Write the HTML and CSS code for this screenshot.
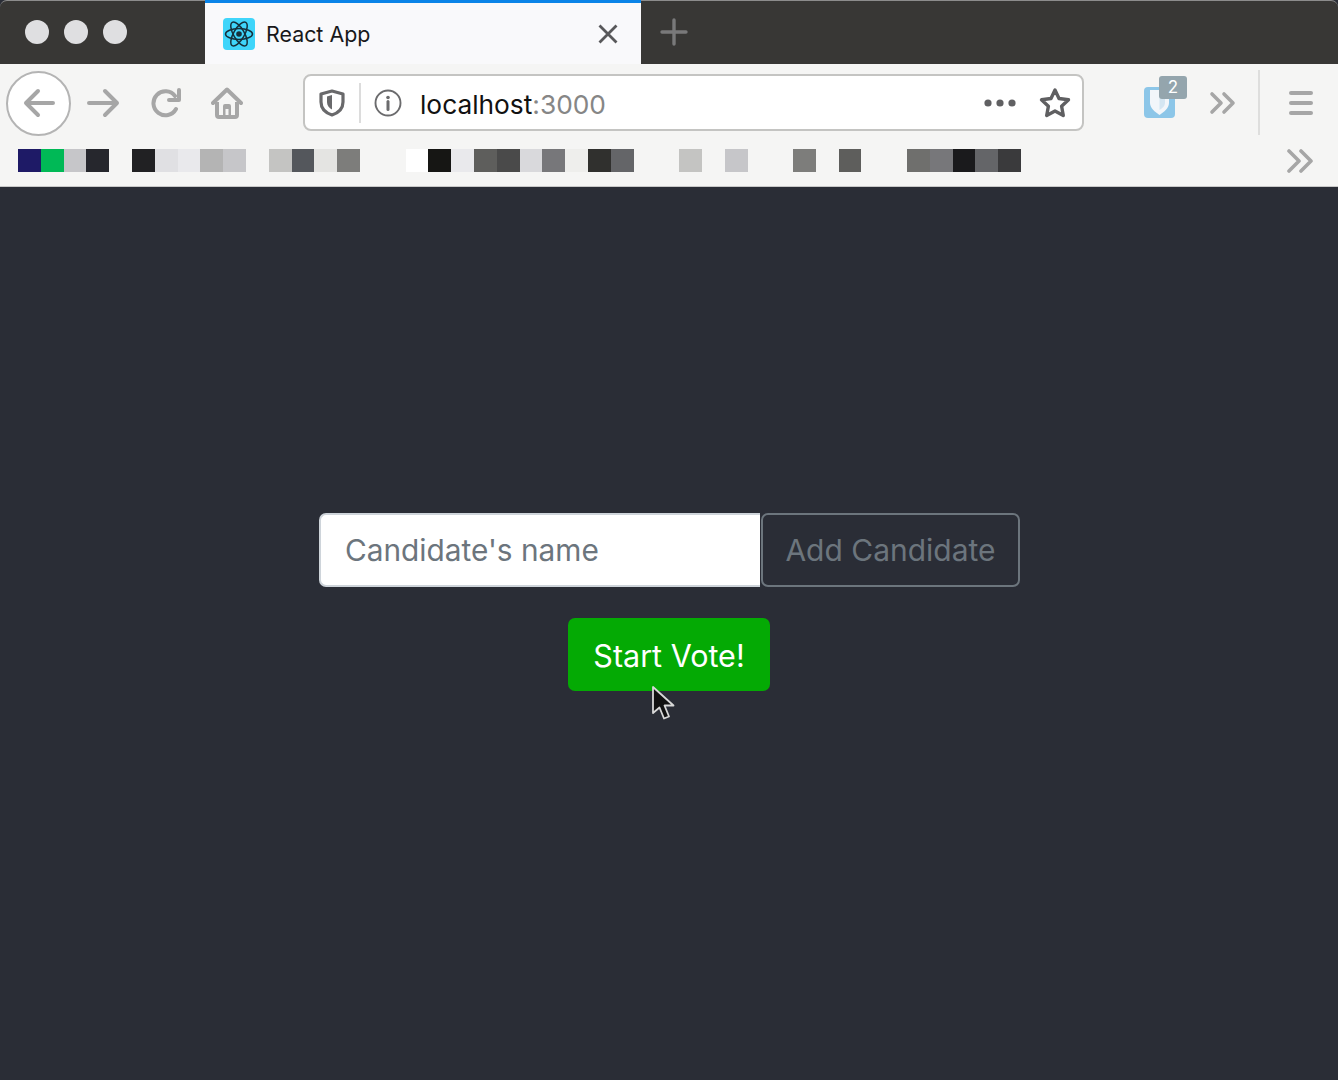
FILE: index.html
```html
<!DOCTYPE html>
<html lang="en">
<head>
    <meta charset="utf-8">
    <title>React App</title>
    <link rel="stylesheet" href="styles.css">
</head>
<body>
    <header class="browser">
        <div class="tabstrip">
            <div class="lights">
                <span class="light"></span>
                <span class="light"></span>
                <span class="light"></span>
            </div>
            <div class="tab">
                <svg class="favicon" width="32" height="32" viewBox="0 0 32 32">
                    <rect width="32" height="32" rx="4" fill="#3fd5fa"/>
                    <g fill="none" stroke="#16303c" stroke-width="1.5">
                        <ellipse cx="16" cy="16" rx="13.5" ry="5.4"/>
                        <ellipse cx="16" cy="16" rx="13.5" ry="5.4" transform="rotate(60 16 16)"/>
                        <ellipse cx="16" cy="16" rx="13.5" ry="5.4" transform="rotate(120 16 16)"/>
                    </g>
                    <circle cx="16" cy="16" r="2.8" fill="#16303c"/>
                </svg>
                <span class="tab-title">React App</span>
                <svg class="tab-close" width="20" height="20" viewBox="0 0 20 20">
                    <path d="M1.5 1.5 L18.5 18.5 M18.5 1.5 L1.5 18.5" fill="none" stroke="#58585a" stroke-width="2.8"/>
                </svg>
            </div>
            <svg class="new-tab" width="28" height="28" viewBox="0 0 28 28">
                <path d="M14 2 V26 M2 14 H26" fill="none" stroke="#79797a" stroke-width="3.4" stroke-linecap="round"/>
            </svg>
        </div>

        <div class="navbar">
            <div class="back-btn">
                <svg width="34" height="30" viewBox="0 0 34 30">
                    <path d="M31 15 H4 M16 3 L4 15 L16 27" fill="none" stroke="#a6a6a6" stroke-width="4" stroke-linecap="round" stroke-linejoin="round"/>
                </svg>
            </div>
            <svg class="icon-forward" width="34" height="30" viewBox="0 0 34 30">
                <path d="M3 15 H31 M19 3 L31 15 L19 27" fill="none" stroke="#a6a6a6" stroke-width="4" stroke-linecap="round" stroke-linejoin="round"/>
            </svg>
            <svg class="icon-reload" width="32" height="30" viewBox="0 0 32 30">
                <path d="M26 21 A12 12 0 1 1 25 8" fill="none" stroke="#a6a6a6" stroke-width="4" stroke-linecap="round"/>
                <path d="M29 2 V12 H19" fill="none" stroke="#a6a6a6" stroke-width="4" stroke-linecap="round" stroke-linejoin="round"/>
            </svg>
            <svg class="icon-home" width="32" height="32" viewBox="0 0 32 32">
                <path d="M2 16 L16 2.5 L30 16" fill="none" stroke="#a6a6a6" stroke-width="4" stroke-linecap="round" stroke-linejoin="round"/>
                <path d="M6 15 V28 Q6 30 8 30 H24 Q26 30 26 28 V15" fill="none" stroke="#a6a6a6" stroke-width="4"/>
                <path d="M12 30 V19 Q12 17 14 17 H18 Q20 17 20 19 V30 H17.5 V22 H14.5 V30 Z" fill="#a6a6a6"/>
            </svg>

            <div class="urlbar">
                <svg class="icon-shield" width="26" height="28" viewBox="0 0 26 28">
                    <path d="M13 2 L24 5 V13 C24 20 19 24 13 26 C7 24 2 20 2 13 V5 Z" fill="none" stroke="#69696b" stroke-width="3.2" stroke-linejoin="round"/>
                    <path d="M13 6 L8 7.5 V13 C8 16.5 10 19 13 20.5 Z" fill="#69696b"/>
                </svg>
                <span class="url-sep"></span>
                <svg class="icon-info" width="28" height="28" viewBox="0 0 28 28">
                    <circle cx="14" cy="14" r="12.5" fill="none" stroke="#6b6b6d" stroke-width="1.9"/>
                    <circle cx="14" cy="8.5" r="1.8" fill="#6b6b6d"/>
                    <path d="M14 12.5 V20.5" fill="none" stroke="#6b6b6d" stroke-width="3" stroke-linecap="round"/>
                </svg>
                <span class="url-text">localhost<span class="url-port">:3000</span></span>
                <svg class="icon-dots" width="32" height="8" viewBox="0 0 32 8">
                    <circle cx="4" cy="4" r="3.6" fill="#606062"/>
                    <circle cx="16" cy="4" r="3.6" fill="#606062"/>
                    <circle cx="28" cy="4" r="3.6" fill="#606062"/>
                </svg>
                <svg class="icon-star" width="32" height="32" viewBox="0 0 32 32">
                    <path d="M16 3 L20 11.5 L29.5 12.8 L22.6 19.3 L24.3 28.5 L16 24 L7.7 28.5 L9.4 19.3 L2.5 12.8 L12 11.5 Z" fill="none" stroke="#5f5f61" stroke-width="3.4" stroke-linejoin="round"/>
                </svg>
            </div>

            <div class="ext">
                <svg class="ext-icon" width="31" height="31" viewBox="0 0 31 31">
                    <rect width="31" height="31" rx="4" fill="#8cc6e8"/>
                    <path d="M6 3 H25 V16 C25 21 20 25 15.5 28 C11 25 6 21 6 16 Z" fill="#f2f6fa"/>
                    <path d="M15.5 6 H21 V16 C21 19 18.5 21 15.5 23 Z" fill="#d4e6f2"/>
                </svg>
                <span class="ext-badge">2</span>
            </div>
            <svg class="icon-more" width="28" height="24" viewBox="0 0 28 24">
                <path d="M3 3 L12 12 L3 21 M15 3 L24 12 L15 21" fill="none" stroke="#a6a6a6" stroke-width="3.6" stroke-linecap="round" stroke-linejoin="round"/>
            </svg>
            <span class="nav-sep"></span>
            <div class="menu-icon">
                <span></span>
                <span></span>
                <span></span>
            </div>
        </div>

        <div class="bookmarks">
            <div class="swatches">
                <i class="navy"></i><i class="green"></i><i class="g-c6"></i><i class="g-26"></i><i></i>
                <i class="g-21"></i><i class="g-e0"></i><i class="g-e9"></i><i class="g-b4"></i><i class="g-c6"></i><i></i>
                <i class="g-c4"></i><i class="g-54"></i><i class="g-e4"></i><i class="g-7d"></i><i></i><i></i>
                <i class="white"></i><i class="g-16"></i><i class="g-e9"></i><i class="g-5e"></i><i class="g-4a"></i><i class="g-d9"></i><i class="g-77"></i><i class="g-ee"></i><i class="g-30"></i><i class="g-64"></i><i></i><i></i>
                <i class="g-c4"></i><i></i><i class="g-c6"></i><i></i><i></i>
                <i class="g-7d"></i><i></i><i class="g-5e"></i><i></i><i></i>
                <i class="g-6f"></i><i class="g-77"></i><i class="g-1a"></i><i class="g-64"></i><i class="g-3a"></i>
            </div>
            <svg class="icon-more-bm" width="28" height="24" viewBox="0 0 28 24">
                <path d="M3 2 L13 12 L3 22 M15 2 L25 12 L15 22" fill="none" stroke="#a6a6a6" stroke-width="3.6" stroke-linecap="round" stroke-linejoin="round"/>
            </svg>
        </div>
    </header>

    <main class="app">
        <div class="add-form">
            <input class="name-input" type="text" placeholder="Candidate's name">
            <button class="add-btn" disabled>Add Candidate</button>
        </div>
        <button class="start-btn">Start Vote!</button>
        <svg class="cursor" width="26" height="36" viewBox="0 0 26 36">
            <path d="M2 2 L2 28 L8.5 22.5 L13 33.5 L18 31.5 L13.5 20.5 L22.5 20.5 Z" fill="#111" stroke="#d8d8d8" stroke-width="1.8" stroke-linejoin="round"/>
        </svg>
    </main>
</body>
</html>
```

FILE: styles.css
```css
* {
    box-sizing: border-box;
}

html, body {
    height: 100%;
}

body {
    margin: 0;
    overflow: hidden;
    background-color: #2a2d36;
    font-family: Inter, "Liberation Sans", sans-serif;
    display: flex;
    flex-direction: column;
}

/* tab strip */
.tabstrip {
    height: 64px;
    background-color: #383735;
    border-top: 1px solid #8c8c8c;
    border-radius: 7px 7px 0 0;
    display: flex;
    align-items: stretch;
}

.lights {
    width: 205px;
    padding: 0 0 1px 25px;
    display: flex;
    align-items: center;
    gap: 15px;
}

.light {
    width: 24px;
    height: 24px;
    border-radius: 50%;
    background-color: #dfdfe1;
}

.tab {
    width: 436px;
    margin-top: -1px;
    background-color: #f9f9fb;
    border-top: 3px solid #0a84e8;
    padding: 0 23px 0 18px;
    display: flex;
    align-items: center;
}

.favicon {
    flex: none;
}

.tab-title {
    margin-left: 11px;
    font-size: 21.4px;
    color: #18181a;
    flex: 1;
}

.new-tab {
    align-self: center;
    margin: 0 0 1px 19px;
}

/* toolbar */
.navbar {
    height: 73px;
    background-color: #f5f5f4;
    padding-left: 6px;
    display: flex;
    align-items: center;
}

.back-btn {
    width: 65px;
    height: 65px;
    border-radius: 50%;
    border: 2px solid #b4b4b4;
    background-color: #fff;
    margin-top: 5px;
    display: flex;
    align-items: center;
    justify-content: center;
    flex: none;
}

.navbar svg {
    flex: none;
}

.icon-forward {
    margin: 5px 0 0 15px;
}

.icon-reload {
    margin: 5px 0 0 30px;
}

.icon-home {
    margin: 5px 0 0 29px;
}

.urlbar {
    width: 781px;
    height: 57px;
    margin: 4px 0 0 60px;
    background-color: #fff;
    border: 2px solid #c4c4c2;
    border-radius: 8px;
    padding: 0 11px 0 14px;
    display: flex;
    align-items: center;
    flex: none;
}

.url-sep {
    width: 2px;
    height: 40px;
    margin: 0 13px 0 14px;
    background-color: #dcdcdc;
}

.url-text {
    margin-left: 18px;
    padding-top: 3px;
    font-size: 26.3px;
    color: #111;
    flex: 1;
}

.url-port {
    color: #868686;
}

.icon-dots {
    margin-right: 23px;
}

.ext {
    width: 44px;
    height: 45px;
    margin: 0 0 4px 60px;
    flex: none;
    position: relative;
    padding-top: 11px;
}

.ext-badge {
    position: absolute;
    top: 0;
    left: 15px;
    width: 28px;
    height: 23px;
    border-radius: 3px;
    background-color: #94a5ad;
    color: #fff;
    font-size: 17px;
    line-height: 23px;
    text-align: center;
}

.icon-more {
    margin: 5px 0 0 21px;
}

.nav-sep {
    width: 2px;
    height: 65px;
    margin: 4px 0 0 21px;
    background-color: #dededd;
}

.menu-icon {
    width: 24px;
    margin: 5px 0 0 29px;
    display: flex;
    flex-direction: column;
    gap: 6px;
}

.menu-icon span {
    height: 4px;
    border-radius: 2px;
    background-color: #a6a6a6;
}

/* bookmarks */
.bookmarks {
    height: 50px;
    background-color: #f5f5f4;
    border-bottom: 1px solid #c8c8c8;
    padding: 0 24px 3px 18px;
    display: flex;
    align-items: center;
    justify-content: space-between;
}

.icon-more-bm {
    margin-top: 2px;
}

.swatches {
    display: grid;
    grid-template-columns: repeat(45, 22.8px);
    height: 23px;
}

.navy { background-color: #1e1a66; }
.green { background-color: #00b956; }
.white { background-color: #fff; }
.g-16 { background-color: #161614; }
.g-1a { background-color: #1a1a1c; }
.g-21 { background-color: #212123; }
.g-26 { background-color: #26272d; }
.g-30 { background-color: #30302e; }
.g-3a { background-color: #3a3a3c; }
.g-4a { background-color: #4a4a4a; }
.g-54 { background-color: #54575c; }
.g-5e { background-color: #5e5e5c; }
.g-64 { background-color: #646568; }
.g-6f { background-color: #6f6f6d; }
.g-77 { background-color: #77777a; }
.g-7d { background-color: #7d7d7b; }
.g-b4 { background-color: #b4b4b4; }
.g-c4 { background-color: #c4c4c2; }
.g-c6 { background-color: #c6c6c9; }
.g-d9 { background-color: #d9d9dc; }
.g-e0 { background-color: #e0e0e3; }
.g-e4 { background-color: #e4e4e2; }
.g-e9 { background-color: #e9e9ec; }
.g-ee { background-color: #eeeeec; }

/* the app */
.app {
    flex: 1;
    position: relative;
    padding-top: 326px;
    display: flex;
    flex-direction: column;
    align-items: center;
}

.add-form {
    display: flex;
    height: 74px;
    margin-left: 1px;
}

.name-input {
    width: 441px;
    padding: 0 24px;
    font-family: inherit;
    font-size: 29.8px;
    color: #495057;
    background-color: #fff;
    border: 2px solid #ced4da;
    border-right: 0;
    border-radius: 7px 0 0 7px;
    outline: none;
}

.name-input::placeholder {
    color: #6c757d;
    opacity: 1;
}

.add-btn {
    width: 259px;
    font-family: inherit;
    font-size: 30px;
    color: #6c757d;
    background: transparent;
    border: 2px solid #6c757d;
    border-radius: 7px;
    margin-left: 1px;
    padding: 0;
}

.start-btn {
    width: 202px;
    height: 73px;
    margin-top: 31px;
    font-family: inherit;
    font-size: 30.5px;
    color: #fff;
    background-color: #04aa04;
    border: none;
    border-radius: 7px;
    padding: 1px 0 0;
}

.cursor {
    position: absolute;
    left: 651px;
    top: 498px;
}
```
